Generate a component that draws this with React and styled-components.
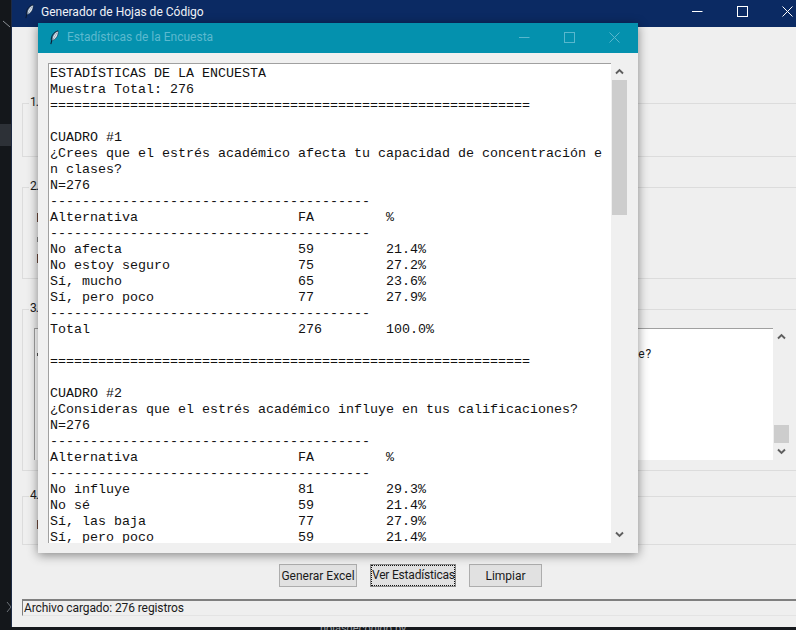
import React from 'react';
import styled, {createGlobalStyle} from 'styled-components';

const GlobalStyle = createGlobalStyle`
  html, body { margin: 0; padding: 0; background: #16191d; }
  * { box-sizing: border-box; }
`

const row = (name, fa, pct) => name.padEnd(31) + String(fa).padEnd(11) + pct
const DOUBLE = '='.repeat(60)
const SINGLE = '-'.repeat(40)

const REPORT = [
  'ESTADÍSTICAS DE LA ENCUESTA',
  'Muestra Total: 276',
  DOUBLE,
  '',
  'CUADRO #1',
  '¿Crees que el estrés académico afecta tu capacidad de concentración e',
  'n clases?',
  'N=276',
  SINGLE,
  row('Alternativa', 'FA', '%'),
  SINGLE,
  row('No afecta', 59, '21.4%'),
  row('No estoy seguro', 75, '27.2%'),
  row('Sí, mucho', 65, '23.6%'),
  row('Sí, pero poco', 77, '27.9%'),
  SINGLE,
  row('Total', 276, '100.0%'),
  '',
  DOUBLE,
  '',
  'CUADRO #2',
  '¿Consideras que el estrés académico influye en tus calificaciones?',
  'N=276',
  SINGLE,
  row('Alternativa', 'FA', '%'),
  SINGLE,
  row('No influye', 81, '29.3%'),
  row('No sé', 59, '21.4%'),
  row('Sí, las baja', 77, '27.9%'),
  row('Sí, pero poco', 59, '21.4%'),
].join('\n')

const Feather = () => (
  <FeatherSvg viewBox="0 0 10 16">
    <path d="M9 .6C5.4 1.4 2.4 4.6 1.6 8.2c-.3 1.4-.2 2.6 .3 3.6" fill="none" stroke="#0b1a33" strokeWidth="1.1" />
    <path d="M1.9 11.6L.9 15.4" fill="none" stroke="#0b1a33" strokeWidth="1.2" />
    <path d="M9 .8C6.2 1.8 3.4 5 2.6 8.4c-.2 1-.2 2-.1 2.8 3-.6 5.4-3.6 6.2-6.6.4-1.6.5-2.9 .3-3.8z" fill="#e9f0f7" stroke="#1c3048" strokeWidth=".7" />
    <path d="M7.6 3L3.2 10.4" fill="none" stroke="#6d8196" strokeWidth=".7" />
  </FeatherSvg>
)

const WindowButtons = ({color, gap}) => (
  <Controls $gap={gap}>
    <svg width="11" height="11" viewBox="0 0 11 11"><path d="M0 5.5h10.5" stroke={color} strokeWidth="1" /></svg>
    <svg width="11" height="11" viewBox="0 0 11 11"><rect x=".5" y=".5" width="10" height="10" fill="none" stroke={color} strokeWidth="1" /></svg>
    <svg width="11" height="11" viewBox="0 0 11 11"><path d="M.5 .5l10 10M10.5 .5l-10 10" stroke={color} strokeWidth="1" /></svg>
  </Controls>
)

const Arrow = ({down}) => (
  <ArrowSlot>
    <svg width="9" height="7" viewBox="0 0 9 7">
      <path d={down ? 'M1 1.5l3.5 3.5 3.5-3.5' : 'M1 5.5l3.5-3.5 3.5 3.5'} fill="none" stroke="#5f5f5f" strokeWidth="1.9" />
    </svg>
  </ArrowSlot>
)

const Scrollbar = ({offset, thumb}) => (
  <ScrollColumn>
    <Arrow />
    <ScrollTrack $offset={offset}><ScrollThumb $height={thumb} /></ScrollTrack>
    <Arrow down />
  </ScrollColumn>
)

export default function App() {
  return (
    <Desktop>
      <GlobalStyle />
      <SideStrip>
        <StripChevron viewBox="0 0 12 12" $mt={0}><path d="M3 1l7 6" stroke="#8d9298" strokeWidth="1" fill="none" /></StripChevron>
        <StripActive />
        <StripChevron viewBox="0 0 12 12" $mt={455}><path d="M7 1l4 5-4 5" stroke="#6d7278" strokeWidth="1" fill="none" /></StripChevron>
      </SideStrip>

      <MainColumn>
        <MainWindow>
          <MainTitleBar>
            <Feather />
            <MainTitle>Generador de Hojas de Código</MainTitle>
            <WindowButtons color="#ffffff" gap={34} />
          </MainTitleBar>

          <MainBody>
            <Group $height={54} $mt={76}>
              <Legend>1.</Legend>
            </Group>

            <Group $height={92} $mt={30} $pl={14} $pt={25}>
              <Legend>2.</Legend>
              <Sliver $height={9} />
              <Sliver $height={5} $mt={15} $color="#8a8a8a" />
              <Sliver $height={9} $mt={12} />
            </Group>

            <Group $height={162} $mt={30} $pl={11} $pt={18}>
              <Legend>3.</Legend>
              <QuestionBox>
                <QuestionList>
                  <QuestionLine>
                    <Sliver $height={3} $color="#555" />
                    <span>¿Cuál es el factor de estrés académico que más te afecta en este semestre?</span>
                  </QuestionLine>
                </QuestionList>
                <Scrollbar offset={80} thumb={18} />
              </QuestionBox>
            </Group>

            <Group $height={49} $mt={25} $pl={14} $pt={23}>
              <Legend>4.</Legend>
              <Sliver $height={9} />
            </Group>

            <ButtonRow>
              <ActionButton $width={78}>Generar Excel</ActionButton>
              <ActionButton $width={86} $focused><FocusRing>Ver Estadísticas</FocusRing></ActionButton>
              <ActionButton $width={73}>Limpiar</ActionButton>
            </ButtonRow>

            <StatusBar>Archivo cargado: 276 registros</StatusBar>
          </MainBody>
        </MainWindow>
        <BehindText>hojasdecodigo.py</BehindText>
      </MainColumn>

      <StatsWindow>
        <StatsTitleBar>
          <Feather />
          <StatsTitle>Estadísticas de la Encuesta</StatsTitle>
          <WindowButtons color="#58b7cd" gap={34} />
        </StatsTitleBar>
        <StatsBody>
          <ReportText>{REPORT}</ReportText>
          <Scrollbar offset={0} thumb={135} />
        </StatsBody>
      </StatsWindow>
    </Desktop>
  )
}

const Desktop = styled.div`
  position: relative;
  display: flex;
  width: 796px;
  height: 630px;
  overflow: hidden;
  background: #16191d;
  font-family: Roboto, "Noto Sans", sans-serif;
  font-size: 12px;
  color: #1a1a1a;
`

const SideStrip = styled.div`
  width: 12px;
  flex-shrink: 0;
  padding-top: 20px;
  background: #14171b;
`

const StripChevron = styled.svg`
  display: block;
  width: 12px;
  height: 12px;
  margin-top: ${p => p.$mt}px;
`

const StripActive = styled.div`
  height: 22px;
  margin-top: 92px;
  background: #2d3137;
`

const MainColumn = styled.div`
  flex: 1;
  min-width: 0;
  display: flex;
  flex-direction: column;
`

const MainWindow = styled.div`
  height: 627px;
  display: flex;
  flex-direction: column;
  background: #efefef;
  box-shadow: -1px 0 0 #1d2a44;
`

const MainTitleBar = styled.div`
  height: 27px;
  flex-shrink: 0;
  display: flex;
  align-items: center;
  padding: 0 3px 4px 13px;
  background: #0b2a63;
`

const MainTitle = styled.span`
  margin-left: 7px;
  flex: 1;
  color: #f1f3f7;
  font-size: 12px;
`

const FeatherSvg = styled.svg`
  width: 9px;
  height: 15px;
  flex-shrink: 0;
`

const Controls = styled.div`
  display: flex;
  align-items: center;
  gap: ${p => p.$gap}px;
`

const MainBody = styled.div`
  flex: 1;
  min-height: 0;
  padding-left: 10px;
  overflow: hidden;
`

const Group = styled.div`
  position: relative;
  height: ${p => p.$height}px;
  margin-top: ${p => p.$mt}px;
  margin-right: -8px;
  padding: ${p => p.$pt || 0}px 0 0 ${p => p.$pl || 0}px;
  border: 1px solid #dcdcdc;
`

const Legend = styled.span`
  position: absolute;
  left: 6px;
  top: -9px;
  padding: 0 1px;
  background: #efefef;
  font-size: 12px;
  line-height: 14px;
  letter-spacing: -1px;
`

const Sliver = styled.div`
  width: 2px;
  height: ${p => p.$height}px;
  margin-top: ${p => p.$mt || 0}px;
  background: ${p => p.$color || '#6e4a3c'};
`

const QuestionBox = styled.div`
  display: flex;
  width: 755px;
  height: 132px;
`

const QuestionList = styled.div`
  width: 740px;
  padding: 17px 0 0 2px;
  background: #ffffff;
  border-top: 1px solid #a0a0a0;
  border-left: 1px solid #a0a0a0;
`

const QuestionLine = styled.div`
  display: flex;
  align-items: center;
  justify-content: space-between;
  width: 615px;
  line-height: 16px;
  white-space: nowrap;
  font-size: 12px;
  letter-spacing: 0.8px;
`

const ScrollColumn = styled.div`
  width: 15px;
  margin-left: 1px;
  flex-shrink: 0;
  display: flex;
  flex-direction: column;
`

const ArrowSlot = styled.div`
  height: 17px;
  flex-shrink: 0;
  display: flex;
  align-items: center;
  justify-content: center;
`

const ScrollTrack = styled.div`
  flex: 1;
  min-height: 0;
  padding-top: ${p => p.$offset}px;
`

const ScrollThumb = styled.div`
  height: ${p => p.$height}px;
  background: #cdcdcd;
`

const ButtonRow = styled.div`
  display: flex;
  gap: 13px;
  margin-top: 19px;
  padding-left: 257px;
`

const ActionButton = styled.button`
  width: ${p => p.$width}px;
  height: 23px;
  padding: 0;
  background: #e1e1e1;
  border: 1px solid ${p => p.$focused ? '#8a8a8a' : '#adadad'};
  font-family: inherit;
  font-size: 12px;
  color: #1a1a1a;
  white-space: nowrap;
`

const FocusRing = styled.span`
  display: block;
  height: 100%;
  line-height: 19px;
  letter-spacing: -0.2px;
  border: 1px dotted #111;
`

const StatusBar = styled.div`
  height: 17px;
  margin-top: 12px;
  padding-left: 1px;
  line-height: 14px;
  font-size: 12px;
  letter-spacing: -0.1px;
  border-top: 2px solid #7f7f7f;
  border-left: 1px solid #7f7f7f;
  border-bottom: 1px solid #e4e4e4;
`

const BehindText = styled.div`
  height: 3px;
  padding-left: 308px;
  overflow: hidden;
  line-height: 3px;
  font-size: 11px;
  color: #9a9ea3;
  background: #16191d;
`

const StatsWindow = styled.div`
  position: absolute;
  left: 38px;
  top: 23px;
  width: 600px;
  height: 530px;
  display: flex;
  flex-direction: column;
  background: #f0f0f0;
  box-shadow: 0 2px 10px rgba(0, 0, 0, 0.45);
`

const StatsTitleBar = styled.div`
  height: 30px;
  flex-shrink: 0;
  display: flex;
  align-items: center;
  padding: 0 18px 2px 12px;
  background: #0491ae;
`

const StatsTitle = styled.span`
  margin-left: 8px;
  flex: 1;
  color: #5cb9cf;
  font-size: 12px;
`

const StatsBody = styled.div`
  flex: 1;
  min-height: 0;
  display: flex;
  padding: 10px 11px 10px 10px;
`

const ReportText = styled.pre`
  flex: 1;
  min-width: 0;
  margin: 0;
  padding: 2px 0 0 1px;
  overflow: hidden;
  background: #ffffff;
  border-top: 1px solid #a0a0a0;
  border-left: 1px solid #a0a0a0;
  font-family: "Liberation Mono", "Courier New", monospace;
  font-size: 13.33px;
  line-height: 16px;
  color: #111111;
`
